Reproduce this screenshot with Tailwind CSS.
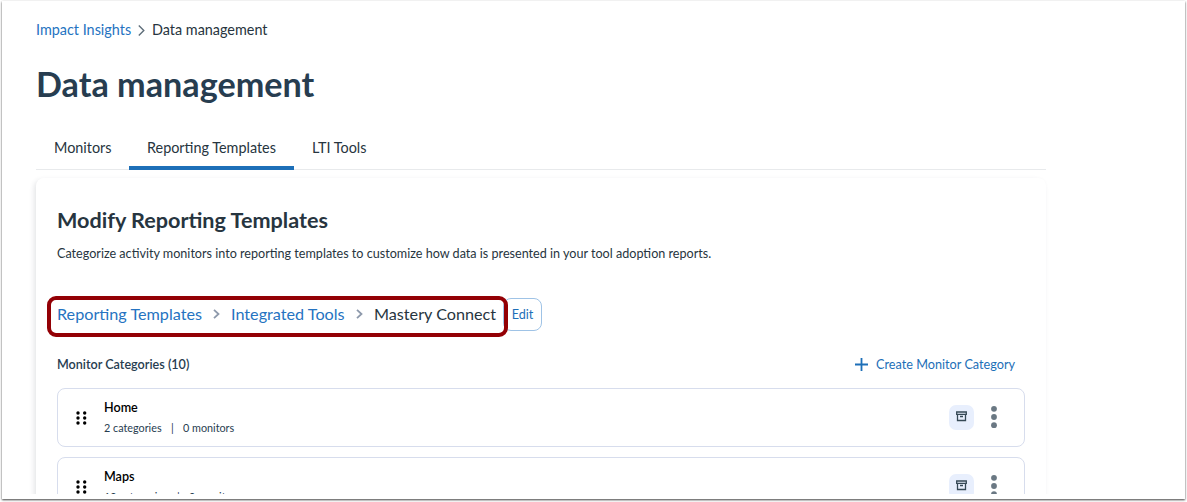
<!DOCTYPE html>
<html lang="en">
<head>
    <meta charset="UTF-8">
    <meta name="viewport" content="width=device-width, initial-scale=1.0">
    <title>Data management</title>
    <script src="https://cdn.jsdelivr.net/npm/@tailwindcss/browser@4"></script>
</head>
<body class="bg-white h-[502px] overflow-hidden pt-px px-[2px] font-['Lato',sans-serif] text-[#273540]">
    <div class="h-[498px] bg-white overflow-hidden shadow-[0_1px_2px_rgba(0,0,0,0.75)]">
        <div class="h-[493px] overflow-hidden pl-[34px]">
            <!-- Page breadcrumb -->
            <nav class="flex items-center h-5 mt-[19px] text-[14.4px] leading-5">
                <a href="#" class="w-[95px] whitespace-nowrap text-[#2573c1]">Impact Insights</a>
                <svg class="w-[7px] h-[11px] ml-[7px] mr-[7px]" viewBox="0 0 7 11" fill="none" stroke="#5f6e7a" stroke-width="1.4"><path d="M0.8 0.5 5.8 5.5 0.8 10.5"/></svg>
                <span>Data management</span>
            </nav>

            <h1 class="mt-[22px] h-11 leading-11 text-[34.2px] font-bold text-[#273d50]">Data management</h1>

            <!-- Tabs -->
            <div class="flex w-[1010px] h-[43px] mt-[21px] border-b border-[#e8eaec] text-[14.4px] leading-5">
                <div class="w-[93px] pt-[11px] pl-[18px] whitespace-nowrap">Monitors</div>
                <div class="w-[165px] h-[43px] pt-[11px] pl-[18px] border-b-4 border-[#1d6fb8] whitespace-nowrap">Reporting Templates</div>
                <div class="pt-[11px] pl-[18px] whitespace-nowrap">LTI Tools</div>
            </div>

            <!-- Card -->
            <main class="w-[1010px] h-[340px] mt-[8px] pl-[21px] rounded-t-lg bg-white shadow-[-2px_2px_5px_rgba(39,53,64,0.12)]">
                <h2 class="pt-[28px] leading-7 text-[21.6px] font-bold">Modify Reporting Templates</h2>
                <p class="mt-[10px] leading-5 text-[12.6px]">Categorize activity monitors into reporting templates to customize how data is presented in your tool adoption reports.</p>

                <div class="relative flex items-center h-[34px] mt-[34px] text-[16.2px] whitespace-nowrap">
                    <a href="#" class="w-[145px] -mt-[2px] text-[#2573c1]">Reporting Templates</a>
                    <svg class="w-[7px] h-[10px] ml-[11px] mr-[11px] -mt-[2px]" viewBox="0 0 7 10" fill="none" stroke="#8d99ab" stroke-width="1.8"><path d="M1 0.8 5.5 5 1 9.2"/></svg>
                    <a href="#" class="w-[114px] -mt-[2px] text-[#2573c1]">Integrated Tools</a>
                    <svg class="w-[7px] h-[10px] ml-[11px] mr-[11px] -mt-[2px]" viewBox="0 0 7 10" fill="none" stroke="#8d99ab" stroke-width="1.8"><path d="M1 0.8 5.5 5 1 9.2"/></svg>
                    <span class="w-[122px] -mt-[2px]">Mastery Connect</span>
                    <button class="w-[39px] h-[33px] ml-[7px] -mt-px pt-px border border-[#9fc3e6] rounded-lg text-[12.6px] text-[#1d6fb8]">Edit</button>
                    <div class="absolute -left-[10px] -top-[2px] w-[461px] h-[41px] border-4 border-[#930005] rounded-[9px]"></div>
                </div>

                <div class="flex items-center justify-between w-[959px] h-5 mt-[23px] text-[12.6px]">
                    <h3 class="font-semibold text-[#273d50]">Monitor Categories (10)</h3>
                    <button class="flex items-center gap-[8px] text-[#1d6fb8]">
                        <svg class="w-[13px] h-[13px]" viewBox="0 0 13 13" stroke="#1d6fb8" stroke-width="1.8"><path d="M6.5 0v13M0 6.5h13"/></svg>
                        <span class="w-[140px] text-left text-[12.7px] whitespace-nowrap">Create Monitor Category</span>
                    </button>
                </div>

                <div class="flex flex-col gap-[10px] w-[968px] mt-[13px]">
                    <div class="flex h-[59px] border border-[#d7dded] rounded-lg">
                        <svg class="w-[11px] h-[14px] ml-[18px] mt-[22px]" viewBox="0 0 11 14" fill="#000"><circle cx="2" cy="2" r="1.7"/><circle cx="8.7" cy="2" r="1.7"/><circle cx="2" cy="7" r="1.7"/><circle cx="8.7" cy="7" r="1.7"/><circle cx="2" cy="12" r="1.7"/><circle cx="8.7" cy="12" r="1.7"/></svg>
                        <div class="ml-[17px] pt-[9px]">
                            <div class="text-[12.6px] leading-5 font-semibold text-black">Home</div>
                            <div class="flex text-[10.8px] leading-5 text-[#273d50] whitespace-nowrap"><span class="w-[67px]">2 categories</span><span class="w-[12px]">|</span><span>0 monitors</span></div>
                        </div>
                        <div class="flex ml-auto mr-[27px] mt-[16px]">
                            <div class="flex items-center justify-center w-[25px] h-[25px] rounded-[7px] bg-[#e8effd]">
                                <svg class="w-[11px] h-[11px] -mt-[2px]" viewBox="0 0 11 11" fill="none" stroke="#364956" stroke-width="1.3"><path d="M0.7 1h9.6v2.3H0.7zM1.5 3.2v6.3h8V3.2M4 5.5h3"/></svg>
                            </div>
                            <svg class="w-[6px] h-[24px] ml-[17px]" viewBox="0 0 6 24" fill="#6a7883"><circle cx="3" cy="3.8" r="2.9"/><circle cx="3" cy="12" r="2.9"/><circle cx="3" cy="20.2" r="2.9"/></svg>
                        </div>
                    </div>
                    <div class="flex h-[59px] border border-[#d7dded] rounded-lg">
                        <svg class="w-[11px] h-[14px] ml-[18px] mt-[22px]" viewBox="0 0 11 14" fill="#000"><circle cx="2" cy="2" r="1.7"/><circle cx="8.7" cy="2" r="1.7"/><circle cx="2" cy="7" r="1.7"/><circle cx="8.7" cy="7" r="1.7"/><circle cx="2" cy="12" r="1.7"/><circle cx="8.7" cy="12" r="1.7"/></svg>
                        <div class="ml-[17px] pt-[9px]">
                            <div class="text-[12.6px] leading-5 font-semibold text-black">Maps</div>
                            <div class="flex text-[10.8px] leading-5 text-[#273d50] whitespace-nowrap"><span class="w-[73px]">10 categories</span><span class="w-[12px]">|</span><span>0 monitors</span></div>
                        </div>
                        <div class="flex ml-auto mr-[27px] mt-[16px]">
                            <div class="flex items-center justify-center w-[25px] h-[25px] rounded-[7px] bg-[#e8effd]">
                                <svg class="w-[11px] h-[11px] -mt-[2px]" viewBox="0 0 11 11" fill="none" stroke="#364956" stroke-width="1.3"><path d="M0.7 1h9.6v2.3H0.7zM1.5 3.2v6.3h8V3.2M4 5.5h3"/></svg>
                            </div>
                            <svg class="w-[6px] h-[24px] ml-[17px]" viewBox="0 0 6 24" fill="#6a7883"><circle cx="3" cy="3.8" r="2.9"/><circle cx="3" cy="12" r="2.9"/><circle cx="3" cy="20.2" r="2.9"/></svg>
                        </div>
                    </div>
                </div>
            </main>
        </div>
    </div>
</body>
</html>
